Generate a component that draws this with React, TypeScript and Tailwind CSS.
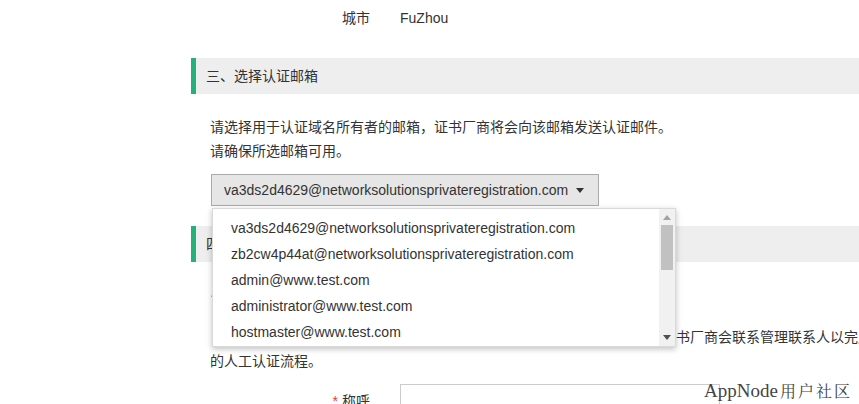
const emails = [
  "va3ds2d4629@networksolutionsprivateregistration.com",
  "zb2cw4p44at@networksolutionsprivateregistration.com",
  "admin@www.test.com",
  "administrator@www.test.com",
  "hostmaster@www.test.com",
  "postmaster@www.test.com",
  "webmaster@www.test.com",
]

const font = "font-['Liberation_Sans','Noto_Sans_CJK_SC',sans-serif]"

const SectionHeader = ({ title }: { title: string }) => (
  <div className="h-[36px] flex items-center bg-[#eeeeee] border-l-[5px] border-[#26b07b] pl-[10px] text-[14px] text-[#333]">
    {title}
  </div>
)

const FormRow = ({ label, required, children }: { label: string; required?: boolean; children: React.ReactNode }) => (
  <div className="flex items-center">
    <div className="w-[179px] text-right text-[14px] text-[#333]">
      {required && <span className="text-[#e4393c] mr-[4px]">*</span>}
      {label}
    </div>
    <div className="ml-[30px]">{children}</div>
  </div>
)

const App = () => {
  return (
    <div className={`relative w-[859px] h-[404px] overflow-hidden bg-white ${font}`}>
      <div className="ml-[191px] w-[780px]">
        <div className="h-[36px] flex items-center">
          <FormRow label="城市">
            <span className="text-[14px] text-[#333]">FuZhou</span>
          </FormRow>
        </div>

        <div className="mt-[22px]">
          <SectionHeader title="三、选择认证邮箱" />
        </div>
        <div className="pl-[19px] mt-[21px] text-[14px] leading-[24px] text-[#333]">
          <p>请选择用于认证域名所有者的邮箱，证书厂商将会向该邮箱发送认证邮件。</p>
          <p>请确保所选邮箱可用。</p>
        </div>
        <div className="pl-[20px] mt-[11px]">
          <div className="w-[388px] h-[32px] flex items-center justify-between border border-[#aaaaaa] bg-[#e6e6e6] pl-[12px] pr-[14px] text-[14px] text-[#333]">
            <span>{emails[0]}</span>
            <svg width="8" height="5" viewBox="0 0 8 5">
              <path d="M0 0 L8 0 L4 5 Z" fill="#333" />
            </svg>
          </div>
        </div>

        <div className="mt-[20px]">
          <SectionHeader title="四、选择认证方式" />
        </div>
        <div className="pl-[19px] mt-[21px] text-[14px] leading-[24px] text-[#333]">
          <p>· 邮箱认证：证书厂商会向所选邮箱发送认证邮件。</p>
          <p className="mt-[18px] indent-[4px]">
            若以上邮箱均无法使用，您也可以选择管理联系人认证方式，届时将会由证书厂商会联系管理联系人以完成域名所有权确认
            的人工认证流程。
          </p>
        </div>
        <div className="mt-[11px]">
          <FormRow label="称呼" required>
            <div className="w-[320px] h-[34px] border border-[#cccccc] bg-white" />
          </FormRow>
        </div>
      </div>

      {/* open dropdown */}
      <div className="absolute left-[212px] top-[208px] w-[464px] h-[139px] bg-white border border-[#d9d9d9] shadow-[0_2px_6px_rgba(0,0,0,0.25)] flex overflow-hidden">
        <div className="flex-1 pt-[6px]">
          {emails.map((e) => (
            <div key={e} className="h-[26px] flex items-center pl-[18px] text-[14px] text-[#333] whitespace-nowrap">
              {e}
            </div>
          ))}
        </div>
        <div className="w-[16px] bg-[#f1f1f1] flex flex-col items-center">
          <svg width="8" height="5" viewBox="0 0 8 5" className="mt-[6px]">
            <path d="M0 5 L8 5 L4 0 Z" fill="#a3a3a3" />
          </svg>
          <div className="mt-[5px] w-[12px] h-[45px] bg-[#c1c1c1]" />
          <div className="flex-1" />
          <svg width="8" height="5" viewBox="0 0 8 5" className="mb-[6px]">
            <path d="M0 0 L8 0 L4 5 Z" fill="#505050" />
          </svg>
        </div>
      </div>

      <div className="absolute left-[704px] top-[377px] flex items-baseline text-[#444] font-['Liberation_Serif','Noto_Serif_CJK_SC','Noto_Sans_CJK_SC',serif] whitespace-nowrap">
        <span className="text-[19px]">AppNode</span>
        <span className="text-[16px] tracking-[2px] ml-[2px]">用户社区</span>
      </div>
    </div>
  )
}

export default App
